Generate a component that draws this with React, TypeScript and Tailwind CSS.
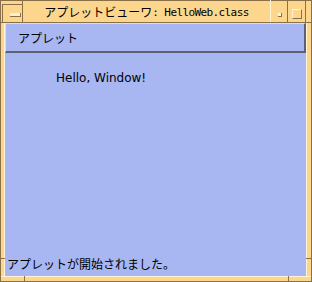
import React from 'react';

const jp = { fontFamily: '"Noto Sans CJK JP", "DejaVu Sans", sans-serif' };

const TitleBar = () => (
  <div className="flex h-[23px] border-b border-[#8a7048]">
    {/* window menu button */}
    <div className="relative w-[23px] border-r border-[#8a7048]">
      <div className="absolute left-[2px] top-[4px] w-[21px] h-[19px] border-t border-l border-[#8a7048]" />
      <div className="absolute left-[10px] top-[13px] w-[11px] h-[4px] bg-[#fff2c8] border-b border-r border-[#8a7048]" />
    </div>
    <div className="flex-1 flex items-center justify-center pt-[2px] text-black whitespace-nowrap">
      <span className="text-[12px] leading-none" style={jp}>アプレットビューワ</span>
      <span
        className="text-[11px] leading-none tracking-[-0.6px]"
        style={{ fontFamily: '"DejaVu Sans Mono", monospace' }}
      >
        : HelloWeb.class
      </span>
    </div>
    {/* minimize */}
    <div className="relative w-[18px] border-l border-[#fff4d6] border-r border-r-[#8a7048]">
      <div className="absolute left-[7px] top-[13px] w-[4px] h-[4px] bg-[#fff4d6] border-b border-r border-[#8a7048]" />
    </div>
    {/* maximize */}
    <div className="relative w-[18px] border-r border-[#8a7048]">
      <div className="absolute left-[4px] top-[9px] w-[10px] h-[10px] border-t border-l border-[#fff4d6] border-b border-r border-b-[#8a7048] border-r-[#8a7048]" />
    </div>
    <div className="w-[6px]" />
  </div>
);

export default function App() {
  return (
    <div className="relative w-[312px] h-[282px] bg-[#fdd68e] flex flex-col overflow-hidden">
      <div className="absolute inset-0 border border-[#8a7048] pointer-events-none" />
      <TitleBar />
      <div className="flex-1 flex min-h-0">
        <div className="w-[5px] border-r border-[#fff4d6]" />
        <div className="flex-1 flex flex-col bg-[#a8b6f2]">
          {/* menu bar */}
          <div className="h-[30px] flex items-center pl-[12px] border-t border-l border-[#d6dcfa] border-b-2 border-r-2 border-b-[#5f6072] border-r-[#5f6072]">
            <span className="text-[12px] text-black leading-none" style={jp}>アプレット</span>
          </div>
          {/* applet area */}
          <div className="flex-1 flex flex-col">
            <div className="pl-[51px] pt-[11px]">
              <span
                className="text-[12px] text-black leading-none"
                style={{ fontFamily: '"DejaVu Sans", sans-serif' }}
              >
                Hello, Window!
              </span>
            </div>
          </div>
          {/* status */}
          <div className="h-[22px] flex items-center pl-[2px] pb-[2px]">
            <span className="text-[12px] text-black leading-none" style={jp}>
              アプレットが開始されました。
            </span>
          </div>
        </div>
        <div className="w-[6px] border-l border-[#fff4d6]" />
      </div>
      <div className="h-[6px] border-t border-[#fff4d6]" />
      {/* resize corner notches */}
      <div className="absolute left-[24px] bottom-0 w-px h-[6px] bg-[#8a7048]" />
      <div className="absolute right-[23px] bottom-0 w-px h-[6px] bg-[#8a7048]" />
      <div className="absolute right-0 top-[258px] w-[6px] h-px bg-[#8a7048]" />
      <div className="absolute left-0 top-[258px] w-[5px] h-px bg-[#8a7048]" />
    </div>
  );
}
